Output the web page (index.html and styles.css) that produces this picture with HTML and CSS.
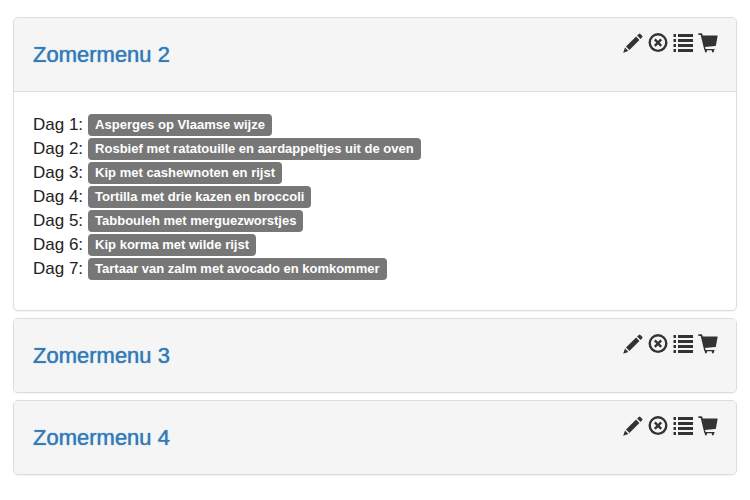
FILE: index.html
```html
<!DOCTYPE html>
<html lang="nl">
<head>
<meta charset="utf-8">
<meta name="viewport" content="width=device-width, initial-scale=1">
<title>Zomermenu</title>
<link rel="stylesheet" href="styles.css">
</head>
<body>
<svg class="sprite" aria-hidden="true">
  <symbol id="pencil" viewBox="0 0 20 20">
    <path d="M0.2 19.8 L2 14.6 L5.4 18 Z M3 13.6 L13.1 3.6 L16.4 6.9 L6.4 17 Z M14.1 2.6 L15.8 0.9 Q16.6 0.1 17.4 0.9 L19.2 2.7 Q20 3.5 19.2 4.3 L17.5 6 Z"/>
  </symbol>
  <symbol id="remove" viewBox="0 0 20 20">
    <circle cx="10" cy="9.6" r="8.3" fill="none" stroke="currentColor" stroke-width="2.4"/>
    <path d="M6.8 6.4 L13.2 12.8 M13.2 6.4 L6.8 12.8" fill="none" stroke="currentColor" stroke-width="2.4"/>
  </symbol>
  <symbol id="list" viewBox="0 0 20 20">
    <path d="M0.5 1h2.5v3H0.5z M5 1h15v3H5z M0.5 6h2.5v3H0.5z M5 6h15v3H5z M0.5 11h2.5v3H0.5z M5 11h15v3H5z M0.5 16h2.5v3H0.5z M5 16h15v3H5z"/>
  </symbol>
  <symbol id="cart" viewBox="0 0 20 20">
    <path d="M1 0.2 H3.4 Q4 0.2 4.2 0.8 L4.8 2.6 H19.2 Q19.8 2.6 19.6 3.3 L17.9 12.4 Q17.7 13 17.1 13.1 L7 13.9 L7.6 15.9 H16 Q16.7 15.9 16.7 16.5 Q16.7 17.2 16 17.2 V18 Q16 19.4 14.9 19.4 Q13.8 19.4 13.8 18 V17.2 H9 V18 Q9 19.4 7.9 19.4 Q6.8 19.4 6.8 18 V17.2 Q6.4 17 6.2 16.4 L2.7 1.9 H1 Q0.2 1.9 0.2 1 Q0.2 0.2 1 0.2 Z"/>
  </symbol>
</svg>
<main class="menus">
  <section class="panel">
    <header class="panel-heading">
      <h2 class="title"><a href="#menu-2">Zomermenu 2</a></h2>
      <div class="actions">
        <button type="button" aria-label="Bewerken"><svg><use href="#pencil"/></svg></button>
        <button type="button" aria-label="Verwijderen"><svg><use href="#remove"/></svg></button>
        <button type="button" aria-label="Lijst"><svg><use href="#list"/></svg></button>
        <button type="button" aria-label="Winkelwagen"><svg><use href="#cart"/></svg></button>
      </div>
    </header>
    <ul class="days" id="menu-2">
      <li>Dag 1: <span class="label">Asperges op Vlaamse wijze</span></li>
      <li>Dag 2: <span class="label">Rosbief met ratatouille en aardappeltjes uit de oven</span></li>
      <li>Dag 3: <span class="label">Kip met cashewnoten en rijst</span></li>
      <li>Dag 4: <span class="label">Tortilla met drie kazen en broccoli</span></li>
      <li>Dag 5: <span class="label">Tabbouleh met merguezworstjes</span></li>
      <li>Dag 6: <span class="label">Kip korma met wilde rijst</span></li>
      <li>Dag 7: <span class="label">Tartaar van zalm met avocado en komkommer</span></li>
    </ul>
  </section>
  <section class="panel">
    <header class="panel-heading">
      <h2 class="title"><a href="#menu-3">Zomermenu 3</a></h2>
      <div class="actions">
        <button type="button" aria-label="Bewerken"><svg><use href="#pencil"/></svg></button>
        <button type="button" aria-label="Verwijderen"><svg><use href="#remove"/></svg></button>
        <button type="button" aria-label="Lijst"><svg><use href="#list"/></svg></button>
        <button type="button" aria-label="Winkelwagen"><svg><use href="#cart"/></svg></button>
      </div>
    </header>
  </section>
  <section class="panel">
    <header class="panel-heading">
      <h2 class="title"><a href="#menu-4">Zomermenu 4</a></h2>
      <div class="actions">
        <button type="button" aria-label="Bewerken"><svg><use href="#pencil"/></svg></button>
        <button type="button" aria-label="Verwijderen"><svg><use href="#remove"/></svg></button>
        <button type="button" aria-label="Lijst"><svg><use href="#list"/></svg></button>
        <button type="button" aria-label="Winkelwagen"><svg><use href="#cart"/></svg></button>
      </div>
    </header>
  </section>
</main>
</body>
</html>
```
FILE: styles.css
```css
* {
  box-sizing: border-box;
}

body {
  margin: 0;
  background: #fff;
  color: #222;
  font-family: "Liberation Sans", Arial, sans-serif;
  font-size: 17px;
  line-height: 24px;
}

.sprite {
  display: none;
}

.menus {
  display: flex;
  flex-direction: column;
  gap: 7px;
  padding: 17px 13px;
}

.panel {
  border: 1px solid #ddd;
  border-radius: 5px;
  background: #fff;
  box-shadow: 0 1px 1px rgba(0, 0, 0, 0.05);
  overflow: hidden;
}

.panel-heading {
  display: flex;
  justify-content: space-between;
  align-items: flex-start;
  padding: 15px 18px 24px 19px;
  background: #f5f5f5;
}

.title {
  margin: 9px 0 0;
  font-size: 22px;
  font-weight: 500;
  line-height: 25px;
}

.title a {
  color: #337ab7;
  text-decoration: none;
  text-shadow: 0 0 1px #337ab7;
}

.actions {
  display: flex;
  gap: 5px;
}

.actions button {
  display: block;
  width: 20px;
  height: 20px;
  padding: 0;
  border: 0;
  background: none;
  color: #333;
  cursor: pointer;
}

.actions svg {
  display: block;
  width: 20px;
  height: 20px;
  fill: currentColor;
}

.days {
  margin: 0;
  padding: 21px 19px 29px;
  border-top: 1px solid #ddd;
  list-style: none;
}

.days li {
  display: flex;
  align-items: center;
  gap: 5px;
}

.label {
  padding: 0 7px;
  border-radius: 4px;
  background: #777;
  color: #fff;
  font-size: 13px;
  font-weight: bold;
  line-height: 22px;
}
```
